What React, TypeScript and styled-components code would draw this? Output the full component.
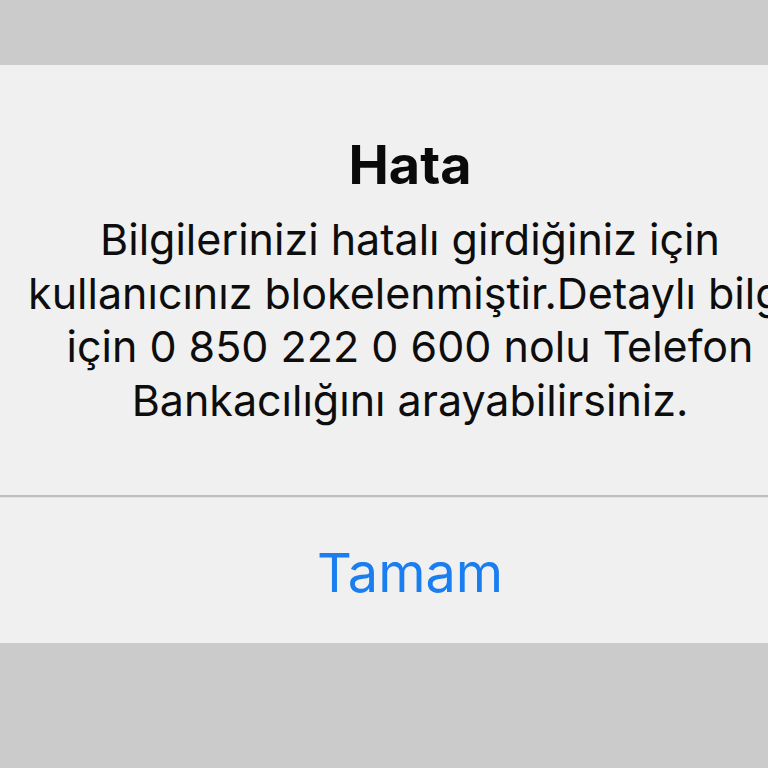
import styled, { createGlobalStyle } from "styled-components";

const Global = createGlobalStyle`
  html, body {
    margin: 0;
    padding: 0;
    background: #cbcbcb;
    overflow: hidden;
  }
  body {
    font-family: Inter, "Liberation Sans", sans-serif;
    -webkit-font-smoothing: antialiased;
  }
`;

const Screen = styled.div`
  width: 768px;
  height: 768px;
  padding-top: 65px;
  box-sizing: border-box;
  overflow: hidden;
`;

const Alert = styled.div`
  width: 900px;
  margin-left: -40px;
  height: 578px;
  background: #f0f0f0;
  border-radius: 28px;
  display: flex;
  flex-direction: column;
`;

const Content = styled.div`
  height: 430px;
  box-sizing: border-box;
  padding-top: 70px;
  display: flex;
  flex-direction: column;
  align-items: center;
  gap: 18px;
`;

const Title = styled.h1`
  margin: 0;
  font-size: 54px;
  line-height: 60px;
  font-weight: 700;
  color: #0a0a0a;
`;

const Message = styled.p`
  margin: 0;
  font-size: 43px;
  line-height: 53.5px;
  font-weight: 400;
  color: #0d0d0d;
  text-align: center;
  white-space: nowrap;
`;

const Divider = styled.div`
  height: 2px;
  background: #bdbdbd;
  border-bottom: 1px solid #e2e2e2;
`;

const Action = styled.button`
  flex: 1;
  border: 0;
  background: transparent;
  font-family: inherit;
  font-size: 54px;
  font-weight: 400;
  color: #1a7ef0;
  padding: 4px 0 0;
  cursor: pointer;
`;

const App = () => (
  <Screen>
    <Global />
    <Alert>
      <Content>
        <Title>Hata</Title>
        <Message>
          Bilgilerinizi hatalı girdiğiniz için
          <br />
          kullanıcınız blokelenmiştir.Detaylı bilgi
          <br />
          için 0 850 222 0 600 nolu Telefon
          <br />
          Bankacılığını arayabilirsiniz.
        </Message>
      </Content>
      <Divider />
      <Action>Tamam</Action>
    </Alert>
  </Screen>
);

export default App;
